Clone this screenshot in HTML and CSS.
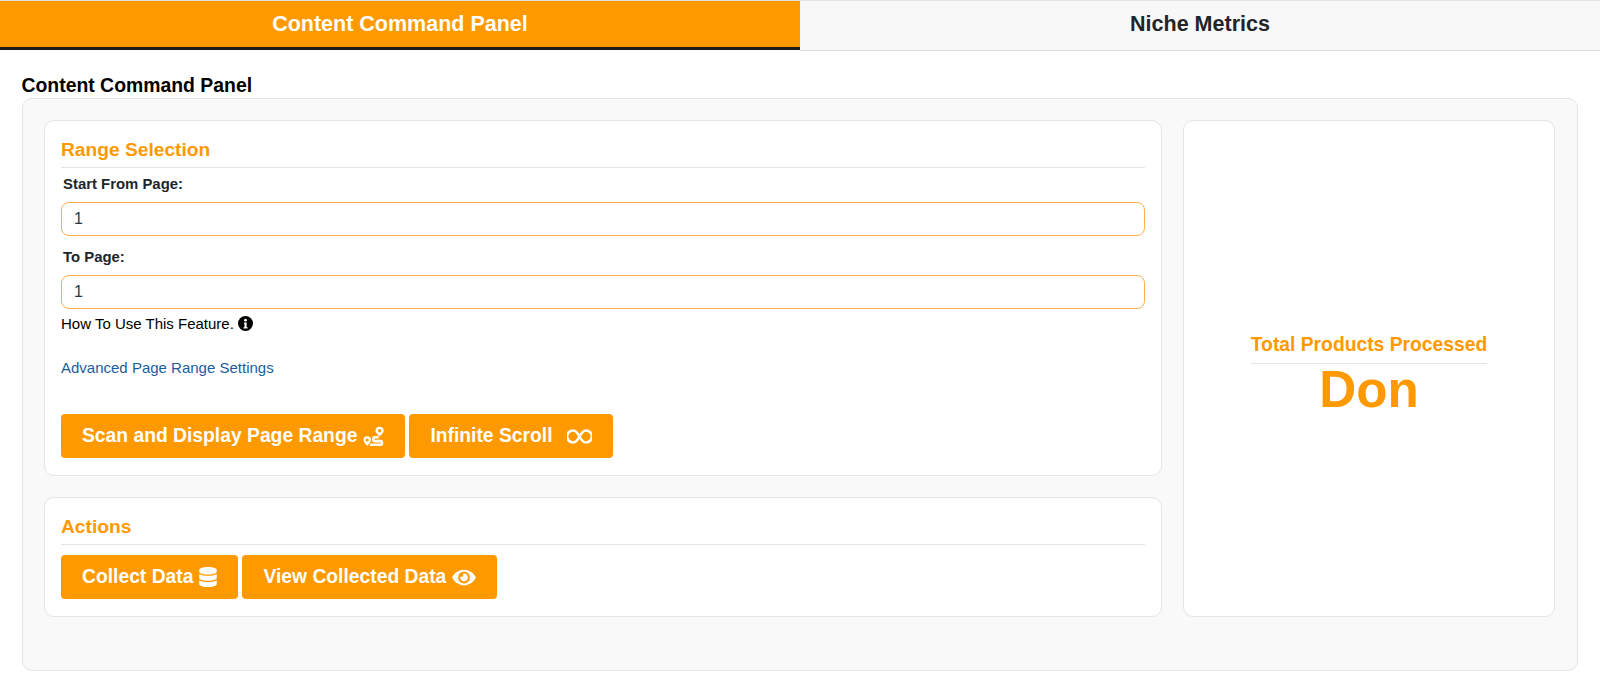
FILE: index.html
```html
<!DOCTYPE html>
<html lang="en">
<head>
<meta charset="utf-8">
<title>Content Command Panel</title>
<link rel="stylesheet" href="styles.css">
</head>
<body>
<nav class="tabs">
  <a class="tab tab-active">Content Command Panel</a>
  <a class="tab">Niche Metrics</a>
</nav>
<main class="page">
  <h2 class="page-title">Content Command Panel</h2>
  <section class="panel">
    <div class="left-col">
      <div class="card">
        <h3 class="card-title">Range Selection</h3>
        <label class="field-label">Start From Page:</label>
        <input class="field-input" type="text" value="1">
        <label class="field-label field-label-second">To Page:</label>
        <input class="field-input" type="text" value="1">
        <p class="help">How To Use This Feature.
          <svg class="info-icon" viewBox="0 0 16 16"><circle cx="8" cy="8" r="8" fill="#000"/><circle cx="8" cy="4.4" r="1.5" fill="#fff"/><path d="M6.3 6.8h2.9v5.2h1v1.4H5.9V12h1V8.2h-.6z" fill="#fff"/></svg>
        </p>
        <a class="adv-link">Advanced Page Range Settings</a>
        <div class="btn-row btn-row-range">
          <button class="btn">Scan and Display Page Range
            <svg class="icon" viewBox="0 0 20 20"><path d="M15.800 .6a3.900 3.900 0 0 0-3.900 3.900c0 2.200 3.900 5.400 3.900 5.400s3.900-3.200 3.900-5.400A3.900 3.900 0 0 0 15.800 .6zm0 5.500a1.600 1.600 0 1 1 0-3.200 1.600 1.600 0 0 1 0 3.200zM4 9.800A3.600 3.600 0 0 0 .4 13.400c0 2 3.600 5.600 3.600 5.600s3.600-3.600 3.600-5.600A3.600 3.600 0 0 0 4 9.800zm0 5a1.500 1.500 0 1 1 0-3 1.500 1.500 0 0 1 0 3z" fill="#fff" fill-rule="evenodd"/><path d="M14 10.800h-2.500a1.800 1.800 0 0 0 0 3.600h5a1.700 1.700 0 0 1 0 3.400H7.500" fill="none" stroke="#fff" stroke-width="2.400" stroke-linecap="round"/></svg>
          </button>
          <button class="btn btn-infinite">Infinite Scroll
            <svg class="icon icon-inf" viewBox="0 0 26 17"><path d="M13 8.500c-1.800-3.400-3.400-6.300-6.600-6.300a6.300 6.300 0 0 0 0 12.600c3.200 0 4.800-2.900 6.600-6.300s3.400-6.300 6.600-6.300a6.300 6.300 0 0 1 0 12.600c-3.200 0-4.800-2.900-6.600-6.300z" fill="none" stroke="#fff" stroke-width="2.700"/></svg>
          </button>
        </div>
      </div>
      <div class="card">
        <h3 class="card-title">Actions</h3>
        <div class="btn-row btn-row-actions">
          <button class="btn">Collect Data
            <svg class="icon icon-db" viewBox="0 0 448 512"><path fill="#fff" d="M448 73.143v45.714C448 159.143 347.667 192 224 192S0 159.143 0 118.857V73.143C0 32.857 100.333 0 224 0s224 32.857 224 73.143zM448 176v102.857C448 319.143 347.667 352 224 352S0 319.143 0 278.857V176c48.125 33.143 136.208 48.572 224 48.572S399.874 209.143 448 176zm0 160v102.857C448 479.143 347.667 512 224 512S0 479.143 0 438.857V336c48.125 33.143 136.208 48.572 224 48.572S399.874 369.143 448 336z"/></svg>
          </button>
          <button class="btn">View Collected Data
            <svg class="icon icon-eye" viewBox="0 0 576 512"><path fill="#fff" d="M572.52 241.4C518.29 135.59 410.93 64 288 64S57.68 135.64 3.48 241.41a32.35 32.35 0 0 0 0 29.19C57.71 376.41 165.07 448 288 448s230.32-71.64 284.52-177.41a32.35 32.35 0 0 0 0-29.19zM288 400a144 144 0 1 1 144-144 143.93 143.93 0 0 1-144 144zm0-240a95.31 95.31 0 0 0-25.31 3.79 47.85 47.85 0 0 1-66.9 66.9A95.78 95.78 0 1 0 288 160z"/></svg>
          </button>
        </div>
      </div>
    </div>
    <aside class="card stat-card">
      <div class="stat">
        <div class="stat-label">Total Products Processed</div>
        <div class="stat-value">Don</div>
      </div>
    </aside>
  </section>
</main>
</body>
</html>
```
FILE: styles.css
```css
* { box-sizing: border-box; }
html, body { margin: 0; padding: 0; background: #fff; }
body { font-family: "Liberation Sans", Arial, sans-serif; color: #212529; overflow: hidden; }

.tabs { display: flex; height: 51px; border-top: 1px solid #e4e4e4; }
.tab {
  flex: 1 1 50%;
  display: flex; align-items: center; justify-content: center;
  padding-bottom: 2px;
  font-size: 21.5px; font-weight: 700;
  background: #f8f8f8; color: #212529;
  border-bottom: 1px solid #dee2e6;
}
.tab-active {
  padding: 1px 0 0;
  background: #ff9900; color: #fff;
  border-bottom: 3px solid #1c1c1c;
  margin-bottom: 1px;
}

.page { padding: 23px 22px 0 21.5px; }
.page-title { margin: 0 0 1px; font-size: 19.4px; line-height: 23px; font-weight: 700; color: #000; }

.panel {
  display: flex; gap: 21px;
  height: 573px;
  padding: 21px 22px 22px 21.5px;
  background: #f9f9f9;
  border: 1px solid #e5e5e5;
  border-radius: 10px;
  align-items: flex-start;
}
.left-col { flex: 0 0 1118px; display: flex; flex-direction: column; gap: 21px; }
.card {
  background: #fff;
  border: 1px solid #e5e5e5;
  border-radius: 10px;
  padding: 16px 16px 17px;
}
.card-title {
  margin: 0 0 8px;
  padding-bottom: 5px;
  font-size: 19.2px; line-height: 25px; font-weight: 700;
  color: #ff9900;
  border-bottom: 1px solid #e5e5e5;
}
.field-label {
  display: block;
  margin: 0 0 9px 2px;
  font-size: 14.9px; line-height: 17px; font-weight: 700;
  color: #212529;
}
.field-label-second { margin-top: 13px; }
.field-input {
  display: block; width: 100%; height: 34px;
  padding: 0 12px;
  font: 16px "Liberation Sans", Arial, sans-serif;
  color: #1d3d4d;
  background: #fff;
  border: 1px solid #ffb04d;
  border-radius: 8px;
  outline: none;
}
.help {
  margin: 6px 0 0;
  display: flex; align-items: center; gap: 4px;
  font-size: 15px; line-height: 17px; color: #000;
}
.info-icon { width: 15px; height: 15px; }
.adv-link {
  display: block;
  margin-top: 27px;
  font-size: 15px; line-height: 17px;
  color: #1c5d99;
}
.btn-row { display: flex; gap: 4px; }
.btn-row-range { margin-top: 38px; }
.btn-row-actions { margin-top: 10px; }
.btn {
  display: inline-flex; align-items: center; gap: 6px;
  height: 44px;
  padding: 0 21px;
  border: 0; border-radius: 4px;
  background: #ff9900; color: #fff;
  font: 700 19.3px "Liberation Sans", Arial, sans-serif;
}
.icon { width: 21px; height: 21px; }
.btn-infinite { gap: 14px; }
.icon-inf { width: 25px; height: 17px; }
.icon-db { width: 18px; height: 20px; }
.icon-eye { width: 24px; height: 21px; }

.stat-card {
  flex: 0 0 372px; height: 497px;
  display: flex; align-items: center; justify-content: center;
}
.stat { text-align: center; padding-top: 13px; }
.stat-label {
  font-size: 19.3px; line-height: 24px; font-weight: 700;
  color: #ff9900;
  padding-bottom: 6px;
  border-bottom: 1px solid #e5e5e5;
}
.stat-value { font-size: 51.2px; line-height: 52px; font-weight: 700; color: #ff9900; }
```
